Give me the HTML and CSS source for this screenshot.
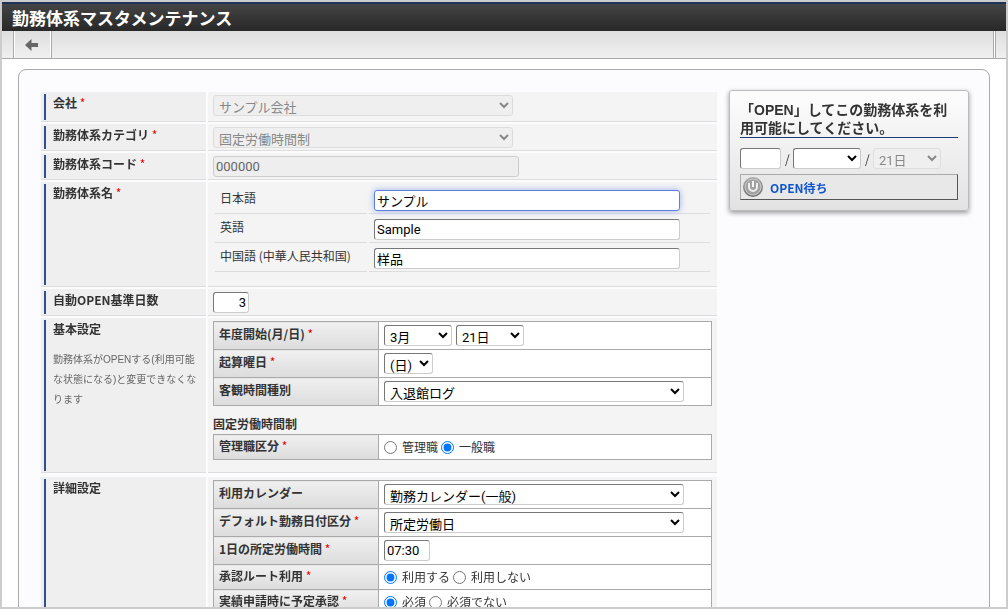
FILE: index.html
```
<!DOCTYPE html>
<html lang="ja">
<head>
    <meta charset="UTF-8">
    <meta name="viewport" content="width=device-width, initial-scale=1.0">
    <title>勤務体系マスタメンテナンス</title>
    <link rel="stylesheet" href="styles.css">
</head>
<body>
    <div class="window">
        <h1 class="title">勤務体系マスタメンテナンス</h1>
        <div class="toolbar">
            <button type="button" class="back" aria-label="戻る">
                <svg width="14" height="12" viewBox="0 0 14 12"><path d="M0 6 L6.5 0 V4 H13 V8 H6.5 V12 Z" fill="#666"/></svg>
            </button>
            <span class="toolbar-end"></span>
        </div>
        <div class="panel">
            <form class="form">
                <div class="row tall">
                    <label class="name" for="company">会社 <em>*</em></label>
                    <div class="value">
                        <select id="company" class="wide" disabled><option>サンプル会社</option></select>
                    </div>
                </div>
                <div class="row">
                    <label class="name" for="category">勤務体系カテゴリ <em>*</em></label>
                    <div class="value">
                        <select id="category" class="wide" disabled><option>固定労働時間制</option></select>
                    </div>
                </div>
                <div class="row">
                    <label class="name" for="code">勤務体系コード <em>*</em></label>
                    <div class="value">
                        <input type="text" id="code" class="long" value="000000" disabled>
                    </div>
                </div>
                <div class="row">
                    <div class="name">勤務体系名 <em>*</em></div>
                    <div class="value names">
                        <div class="lang">
                            <label for="name-ja">日本語</label>
                            <div><input type="text" id="name-ja" class="long" value="サンプル" autofocus></div>
                        </div>
                        <div class="lang">
                            <label for="name-en">英語</label>
                            <div><input type="text" id="name-en" class="long" value="Sample"></div>
                        </div>
                        <div class="lang">
                            <label for="name-zh">中国語 (中華人民共和国)</label>
                            <div><input type="text" id="name-zh" class="long" lang="zh" value="样品"></div>
                        </div>
                    </div>
                </div>
                <div class="row">
                    <label class="name" for="open-days">自動OPEN基準日数</label>
                    <div class="value">
                        <input type="text" id="open-days" class="days" value="3">
                    </div>
                </div>
                <div class="row">
                    <div class="name">
                        基本設定
                        <p class="note">勤務体系がOPENする(利用可能な状態になる)と変更できなくなります</p>
                    </div>
                    <div class="value basic">
                        <table>
                            <tr>
                                <th><label for="start-month">年度開始(月/日) <em>*</em></label></th>
                                <td>
                                    <div class="fields">
                                        <select id="start-month" class="date"><option>3月</option></select>
                                        <select class="date" aria-label="年度開始日"><option>21日</option></select>
                                    </div>
                                </td>
                            </tr>
                            <tr>
                                <th><label for="weekday">起算曜日 <em>*</em></label></th>
                                <td><div class="fields"><select id="weekday" class="weekday"><option>(日)</option></select></div></td>
                            </tr>
                            <tr>
                                <th><label for="log-type">客観時間種別</label></th>
                                <td><div class="fields"><select id="log-type" class="wide"><option>入退館ログ</option></select></div></td>
                            </tr>
                        </table>
                        <h2>固定労働時間制</h2>
                        <table>
                            <tr class="radios">
                                <th>管理職区分 <em>*</em></th>
                                <td>
                                    <div class="fields">
                                        <label><input type="radio" name="manager">管理職</label>
                                        <label><input type="radio" name="manager" checked>一般職</label>
                                    </div>
                                </td>
                            </tr>
                        </table>
                    </div>
                </div>
                <div class="row detail">
                    <div class="name">詳細設定</div>
                    <div class="value">
                        <table>
                            <tr>
                                <th><label for="calendar">利用カレンダー</label></th>
                                <td><div class="fields"><select id="calendar" class="wide"><option>勤務カレンダー(一般)</option></select></div></td>
                            </tr>
                            <tr>
                                <th><label for="day-type">デフォルト勤務日付区分 <em>*</em></label></th>
                                <td><div class="fields"><select id="day-type" class="wide"><option>所定労働日</option></select></div></td>
                            </tr>
                            <tr>
                                <th><label for="work-time">1日の所定労働時間 <em>*</em></label></th>
                                <td><div class="fields"><input type="text" id="work-time" class="time" value="07:30"></div></td>
                            </tr>
                            <tr class="radios">
                                <th>承認ルート利用 <em>*</em></th>
                                <td>
                                    <div class="fields">
                                        <label><input type="radio" name="route" checked>利用する</label>
                                        <label><input type="radio" name="route">利用しない</label>
                                    </div>
                                </td>
                            </tr>
                            <tr class="radios">
                                <th>実績申請時に予定承認 <em>*</em></th>
                                <td>
                                    <div class="fields">
                                        <label><input type="radio" name="approval" checked>必須</label>
                                        <label><input type="radio" name="approval">必須でない</label>
                                    </div>
                                </td>
                            </tr>
                        </table>
                    </div>
                </div>
            </form>
            <aside class="card">
                <h2>「OPEN」してこの勤務体系を利用可能にしてください。</h2>
                <div class="open-date">
                    <input type="text" class="year" aria-label="年">
                    <span>/</span>
                    <select class="date" aria-label="月"><option></option></select>
                    <span>/</span>
                    <select class="date" aria-label="日" disabled><option>21日</option></select>
                </div>
                <button type="button" class="open">
                    <svg width="22" height="22" viewBox="0 0 22 22">
                        <defs>
                            <linearGradient id="ring" x1="0" y1="0" x2="0" y2="1">
                                <stop offset="0" stop-color="#aaa"/>
                                <stop offset="1" stop-color="#707070"/>
                            </linearGradient>
                        </defs>
                        <circle cx="11" cy="11" r="10" fill="url(#ring)"/>
                        <circle cx="11" cy="11" r="8" fill="#a2a2a2" stroke="#ccc"/>
                        <path d="M7 7 V11 A4 4 0 0 0 15 11 V7" fill="none" stroke="#eee" stroke-width="2"/>
                        <path d="M11 5 V11" stroke="#f4f4f4" stroke-width="2"/>
                    </svg>
                    OPEN待ち
                </button>
            </aside>
        </div>
    </div>
    <script>
        // put the cursor after the existing name
        const nameInput = document.getElementById('name-ja');
        nameInput.focus();
        nameInput.setSelectionRange(nameInput.value.length, nameInput.value.length);
    </script>
</body>
</html>
```
FILE: styles.css
```
* {
    box-sizing: border-box;
}

body {
    margin: 0;
    background: #fff;
    color: #333;
    font: 12px/18px "Noto Sans CJK JP", sans-serif;
}

.window {
    height: 100vh;
    overflow: hidden;
    border: 2px solid #ccc;
}

.title {
    margin: 0;
    padding: 0 10px;
    border-top: 2px solid #1f3358;
    background: linear-gradient(#444, #282828);
    color: #fff;
    font-size: 17px;
    line-height: 27px;
}

.toolbar {
    display: flex;
    justify-content: space-between;
    height: 28px;
    padding: 0 10px 0 11px;
    border-bottom: 1px solid #aaa;
    background: linear-gradient(#dedede, #f0f0f0);
}

.back {
    display: flex;
    align-items: center;
    justify-content: center;
    width: 39px;
    padding: 0 2px 0 0;
    border: solid #aaa;
    border-width: 0 1px;
    background: none;
    box-shadow: inset 1px 0 #fff, inset -1px 0 #fff;
    cursor: pointer;
}

.toolbar-end {
    width: 3px;
    border: solid #aaa;
    border-width: 0 1px;
    background: #fff;
}

.panel {
    display: flex;
    align-items: flex-start;
    gap: 12px;
    margin: 10px 16px;
    padding: 20px 20px 20px 22px;
    border: 1px solid #aaa;
    border-radius: 8px;
    background: #fcfcff;
}

.form {
    flex: 1;
    margin-top: 2px;
}

.row {
    display: grid;
    grid-template-columns: 165px 1fr;
    gap: 2px;
    margin-bottom: 2px;
}

.name {
    position: relative;
    padding: 2px 8px 4px 12px;
    border-bottom: 1px solid #ddd;
    background: #efefef;
    font-weight: bold;
}

/* blue marker on the left of each heading */
.name::before {
    content: "";
    position: absolute;
    left: 3px;
    top: 2px;
    bottom: 1px;
    width: 2px;
    background: #2f4f8f;
}

.value {
    padding: 3px 5px 2px;
    border-bottom: 1px solid #ddd;
    background: #f4f4f4;
}

.tall .value {
    padding-bottom: 5px;
}

.value > input,
.value > select {
    display: block;
}

em {
    color: #e00;
    font-style: normal;
    font-weight: normal;
}

.note {
    margin: 12px 0 0;
    color: #666;
    font: 10px/20px "Liberation Sans", "Noto Sans CJK JP", sans-serif;
}

input,
select {
    height: 21px;
    margin: 0;
    border: 1px solid #ccc;
    border-color: #777 #ccc #ccc #777;
    border-radius: 3px;
    background: #fff;
    color: #000;
    font: 13px Roboto, "Noto Sans CJK JP", sans-serif;
}

input {
    padding: 0 2px 1px;
}

input:lang(zh) {
    font-family: Roboto, "Noto Sans CJK SC", sans-serif;
}

select {
    padding: 3px 1px 0;
}

input:disabled {
    border-color: #ccc;
    background: #eee;
    color: #666;
}

select:disabled {
    border-color: #ddd;
    background: #efefef;
    color: #888;
    opacity: 1;
}

input[type="text"]:focus {
    outline: none;
    border-color: #5b7fdb;
    box-shadow: 0 0 6px #9db2ee;
}

input[type="radio"] {
    width: 13px;
    height: 13px;
    margin: 0 5px 0 0;
}

.wide { width: 300px; }
.long { width: 306px; }
.date { width: 68px; }
.weekday { width: 49px; }
.time { width: 46px; }
.year { width: 41px; }

.days {
    width: 36px;
    text-align: right;
}

.names {
    padding: 3px 7px 14px;
}

.lang {
    display: grid;
    grid-template-columns: 152px 1fr;
    gap: 2px;
}

.lang > * {
    height: 29px;
    padding: 5px;
    border-bottom: 1px solid #ddd;
}

.lang > label {
    padding-top: 4px;
}

.lang input {
    display: block;
}

table {
    width: 100%;
    border-collapse: collapse;
    table-layout: fixed;
}

th,
td {
    height: 28px;
    padding: 0 5px;
    border: 1px solid #aaa;
    background: #fff;
    text-align: left;
}

th {
    width: 165px;
    padding-bottom: 4px;
    background: linear-gradient(#f0f0f0, #dcdcdc);
}

.radios th,
.radios td {
    height: 25px;
}

.radios th {
    padding-bottom: 2px;
}

.fields {
    display: flex;
    gap: 4px;
}

.radios .fields {
    gap: 3px;
}

.fields label {
    display: flex;
    align-items: center;
}

.basic {
    padding-bottom: 12px;
}

.basic h2 {
    margin: 9px 0 1px;
    font-size: 12px;
    line-height: 18px;
}

.detail {
    margin-top: 4px;
}

.card {
    width: 240px;
    padding: 10px;
    border: 1px solid #bbb;
    border-radius: 3px;
    background: linear-gradient(#fdfdfd, #e2e2e2);
    box-shadow: 0 2px 5px #999;
}

.card h2 {
    margin: 0 0 10px;
    border-bottom: 1px solid #1f3a75;
    font: bold 14px/18px "Liberation Sans", "Noto Sans CJK JP", sans-serif;
}

.open-date {
    display: flex;
    align-items: center;
    gap: 4px;
}

.open-date span {
    width: 4px;
}

.open {
    display: flex;
    align-items: center;
    gap: 6px;
    width: 100%;
    height: 26px;
    margin-top: 5px;
    padding: 0 1px;
    border: 1px solid #aaa;
    border-color: #aaa #555 #555 #aaa;
    background: #e8e8e8;
    color: #15c;
    font: bold 12px "Noto Sans CJK JP", sans-serif;
    cursor: pointer;
}
```
